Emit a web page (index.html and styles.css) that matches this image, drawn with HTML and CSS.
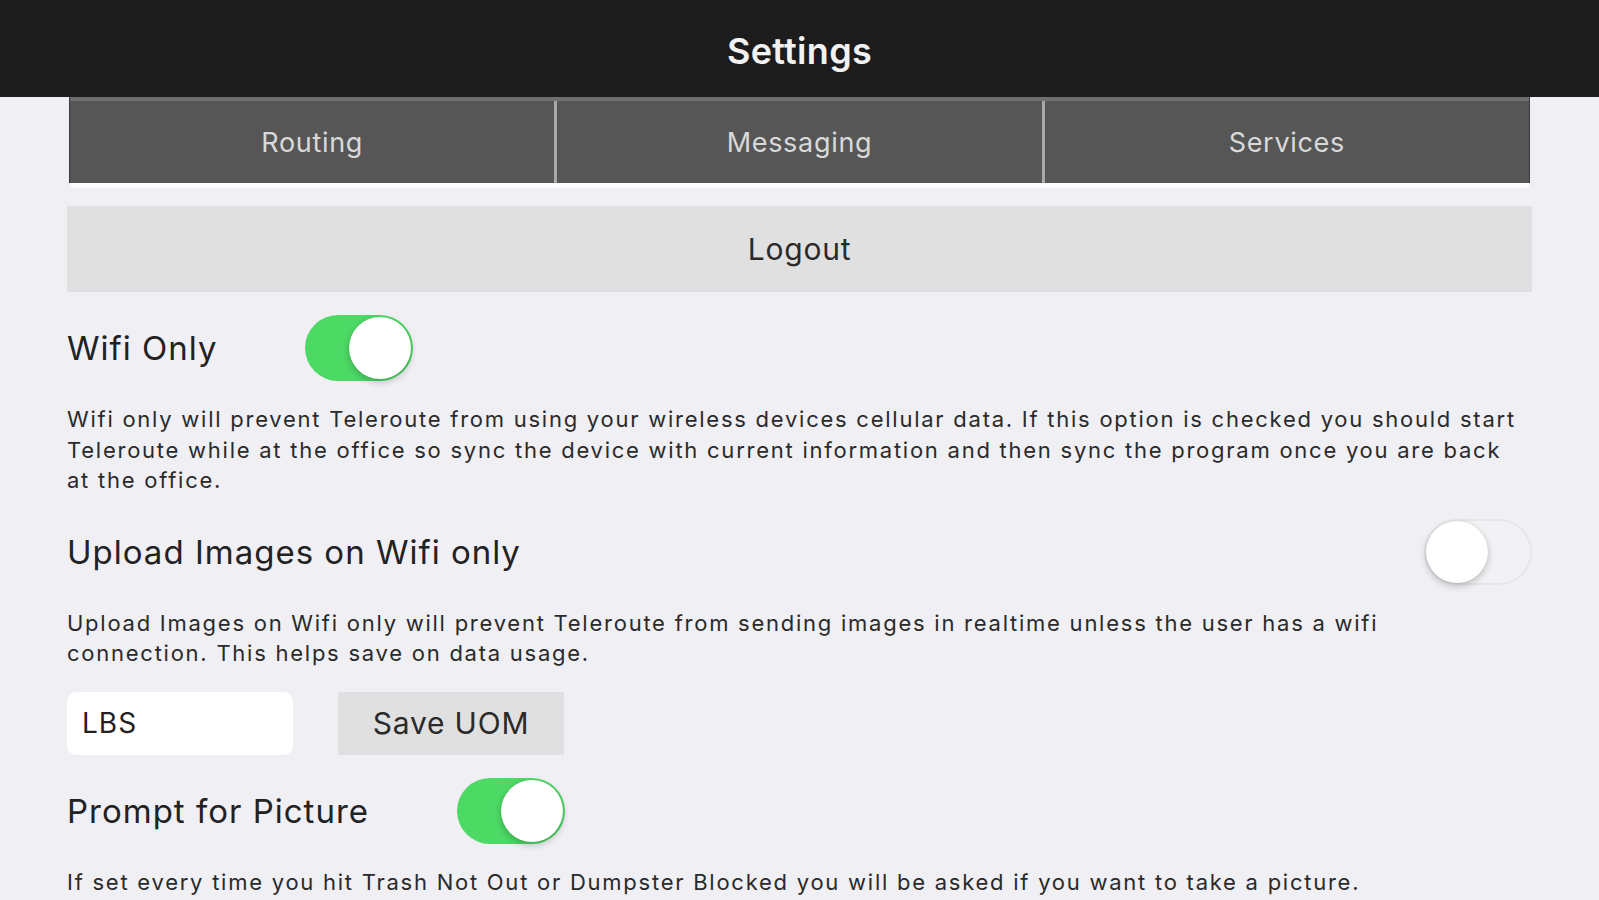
FILE: index.html
```html
<!DOCTYPE html>
<html lang="en">
<head>
<meta charset="utf-8">
<title>Settings</title>
<link rel="stylesheet" href="styles.css">
</head>
<body>
<header class="topbar"><h1 class="title">Settings</h1></header>
<main class="content">
  <nav class="tabs">
    <div class="tab">Routing</div>
    <div class="tab">Messaging</div>
    <div class="tab">Services</div>
  </nav>
  <div class="logout">Logout</div>
  <div class="row">
    <span class="label">Wifi Only</span>
    <span class="switch on"><span class="knob"></span></span>
  </div>
  <p class="desc">Wifi only will prevent Teleroute from using your wireless devices cellular data. If this option is checked you should start Teleroute while at the office so sync the device with current information and then sync the program once you are back at the office.</p>
  <div class="row spread">
    <span class="label">Upload Images on Wifi only</span>
    <span class="switch off"><span class="knob"></span></span>
  </div>
  <p class="desc">Upload Images on Wifi only will prevent Teleroute from sending images in realtime unless the user has a wifi connection. This helps save on data usage.</p>
  <div class="uom">
    <div class="input">LBS</div>
    <div class="btn">Save UOM</div>
  </div>
  <div class="row">
    <span class="label">Prompt for Picture</span>
    <span class="switch on"><span class="knob"></span></span>
  </div>
  <p class="desc">If set every time you hit Trash Not Out or Dumpster Blocked you will be asked if you want to take a picture.</p>
</main>
</body>
</html>
```

FILE: styles.css
```css
html, body {
  margin: 0;
  padding: 0;
}
body {
  background: #efeff4;
  font-family: Inter, "Liberation Sans", Arial, sans-serif;
  color: #222;
  height: 900px;
  overflow: hidden;
}
.topbar {
  height: 97px;
  background: #1c1c1c;
  display: flex;
  align-items: center;
  justify-content: center;
  padding-top: 4px;
  box-sizing: border-box;
}
.title {
  margin: 0;
  font-size: 36px;
  font-weight: 600;
  letter-spacing: 0.3px;
  color: #f2f2f2;
}
.content {
  padding: 0 67px;
  display: flex;
  flex-direction: column;
  gap: 23px;
}
.tabs {
  display: flex;
  margin: 0 3px;
  height: 86px;
  box-sizing: border-box;
  background: #565656;
  border-top: 4px solid #6f6f6f;
  box-shadow: -1px 0 0 #3c3c3c, 1px 0 0 #3c3c3c, 0 5px 0 #fbfbfb;
}
.tab {
  flex: 1;
  display: flex;
  align-items: center;
  justify-content: center;
  color: #d9d9d9;
  font-size: 27px;
  letter-spacing: 0.7px;
}
.tab + .tab {
  border-left: 3px solid #a9a9a9;
}
.logout {
  height: 86px;
  background: #e0e0e0;
  display: flex;
  align-items: center;
  justify-content: center;
  font-size: 30px;
  letter-spacing: 0.8px;
  color: #2a2a2a;
}
.row {
  display: flex;
  align-items: center;
  gap: 88px;
  height: 66px;
}
.row.spread {
  justify-content: space-between;
}
.label {
  font-size: 33px;
  letter-spacing: 1px;
  color: #222;
}
.switch {
  position: relative;
  width: 108px;
  height: 66px;
  border-radius: 33px;
  box-sizing: border-box;
  flex: none;
}
.switch.on {
  background: #4cd964;
}
.switch.off {
  background: #f2f2f5;
  border: 2px solid #e6e6ea;
}
.knob {
  position: absolute;
  top: 2px;
  width: 62px;
  height: 62px;
  border-radius: 50%;
  background: #fff;
  box-shadow: 0 3px 7px rgba(0, 0, 0, 0.22), 0 0 1px rgba(0, 0, 0, 0.15);
}
.switch.on .knob {
  right: 2px;
}
.switch.off .knob {
  top: 0;
  left: 0;
}
.desc {
  margin: 0;
  max-width: 1456px;
  font-size: 22px;
  letter-spacing: 1.75px;
  line-height: 30.5px;
  color: #2a2a2a;
}
.uom {
  display: flex;
  gap: 45px;
  height: 63px;
}
.input {
  width: 226px;
  background: #fff;
  border-radius: 9px;
  box-sizing: border-box;
  padding-left: 15px;
  display: flex;
  align-items: center;
  font-size: 28px;
  letter-spacing: 1px;
  color: #222;
}
.btn {
  width: 226px;
  background: #e0e0e0;
  display: flex;
  align-items: center;
  justify-content: center;
  font-size: 30px;
  letter-spacing: 0.8px;
  color: #2a2a2a;
}
```
